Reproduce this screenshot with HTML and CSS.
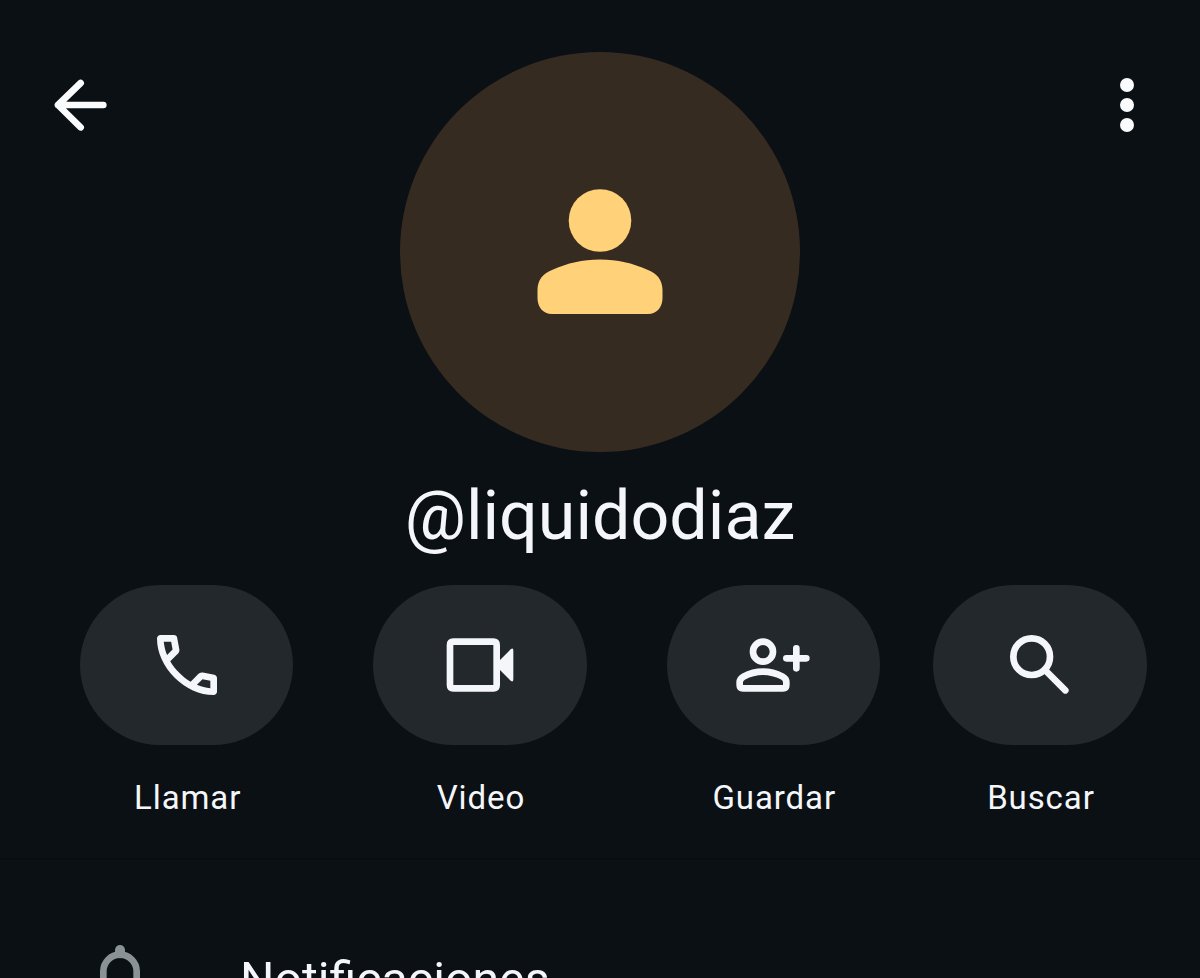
FILE: index.html
```html
<!DOCTYPE html>
<html lang="es">
<head>
  <meta charset="UTF-8" />
  <title>@liquidodiaz</title>
  <link rel="stylesheet" href="styles.css">
</head>
<body>

<header>
  <button class="icon-btn" aria-label="Atrás">
    <svg class="icon line" viewBox="0 0 24 24"><path d="M19 12H5.4M12.2 5.4L5.4 12l6.8 6.7"/></svg>
  </button>
  <div class="avatar">
    <svg viewBox="0 0 126 126">
      <circle cx="63" cy="31.5" r="31.3"/>
      <path d="M.5 101C.5 91 6 84.500 15 81C31 74 45 70.500 63 70.500S95 74 111 81C120 84.500 125.500 91 125.500 101V109C125.500 118 120 125 111 125H15C6 125 .5 118 .5 109Z"/>
    </svg>
  </div>
  <button class="icon-btn" aria-label="Más opciones">
    <svg class="icon" viewBox="0 0 24 24"><circle cx="12" cy="6" r="2.1"/><circle cx="12" cy="12" r="2.1"/><circle cx="12" cy="18" r="2.1"/></svg>
  </button>
</header>

<h1>@liquidodiaz</h1>

<nav class="actions">
  <a class="action">
    <span class="pill">
      <svg class="icon" viewBox="0 0 24 24"><path d="M19.950 21q-3.125 0-6.175-1.362t-5.550-3.863-3.862-5.550T3 4.050q0-.45.3-.75t.75-.3H8.100q.35 0 .625.238t.325.562l.65 3.500q.05.4-.025.675T9.400 8.450L6.975 10.900q.5.925 1.187 1.787t1.513 1.663q.775.775 1.625 1.438T13.100 17l2.350-2.350q.225-.225.588-.337t.712-.063l3.450.7q.35.1.575.363T21 15.900v4.050q0 .45-.3.75t-.75.3ZM6.025 9l1.650-1.650L7.250 5H5.025q.125 1.025.35 2.025T6.025 9Zm8.950 8.950q.975.425 1.988.675T19 18.950v-2.200l-2.350-.475-1.675 1.675Z"/></svg>
    </span>
    <span class="label">Llamar</span>
  </a>
  <a class="action">
    <span class="pill">
      <svg class="icon" viewBox="0 0 24 24"><path fill-rule="evenodd" d="M4 4H16Q18 4 18 6V10.500L21.200 7.300Q22 6.700 22 7.700V16.300Q22 17.300 21.200 16.700L18 13.500V18Q18 20 16 20H4Q2 20 2 18V6Q2 4 4 4ZM4 6V18H16V6Z"/></svg>
    </span>
    <span class="label">Video</span>
  </a>
  <a class="action">
    <span class="pill">
      <svg class="icon line" viewBox="0 0 24 24"><circle cx="9" cy="8" r="3"/><path d="M3 19H15Q16 19 16 18V17.200Q16 16.100 14.900 15.500Q12 14 9 14T3.100 15.500Q2 16.100 2 17.200V18Q2 19 3 19ZM19 7v6M16 10h6"/></svg>
    </span>
    <span class="label">Guardar</span>
  </a>
  <a class="action">
    <span class="pill">
      <svg class="icon line" viewBox="0 0 24 24"><circle cx="9.500" cy="9.500" r="5.500"/><path d="M13.500 13.500l6.100 6.100"/></svg>
    </span>
    <span class="label">Buscar</span>
  </a>
</nav>

<section class="settings">
  <div class="row">
    <svg class="icon line bell" viewBox="0 0 24 24"><path d="M7 18V10a5 5 0 0 1 10 0v8M4.500 18h15"/><path class="stem" d="M12 3.600v1"/></svg>
    <span class="row-text">Notificaciones</span>
  </div>
</section>

</body>
</html>
```
FILE: styles.css
```css
* {
  box-sizing: border-box;
}
body {
  margin: 0;
  height: 978px;
  overflow: hidden;
  background: #0a1014;
  color: #f5f6f9;
  font-family: Roboto, sans-serif;
}
header {
  display: flex;
  justify-content: space-between;
  align-items: flex-start;
  height: 452px;
  padding: 51.500px 33px 0 40px;
}
.icon-btn {
  width: 80px;
  height: 80px;
  margin-top: 13.500px;
  padding: 0;
  border: none;
  background: none;
  color: #fafbfd;
}
.icon {
  display: block;
  width: 80px;
  height: 80px;
  flex: none;
  fill: currentColor;
}
.line {
  fill: none;
  stroke: currentColor;
  stroke-width: 2;
  stroke-linecap: round;
  stroke-linejoin: round;
}
.avatar {
  display: flex;
  justify-content: center;
  width: 400px;
  height: 400px;
  margin-right: 7px;
  padding-top: 137px;
  border-radius: 50%;
  background: #362b21;
}
.avatar svg {
  width: 126px;
  height: 126px;
  fill: #ffd279;
}
h1 {
  margin: 0;
  height: 133px;
  padding-top: 24px;
  text-align: center;
  font-size: 68.200px;
  font-weight: 400;
  line-height: 80px;
}
.actions {
  display: grid;
  grid-template-columns: 293.300px 293.300px 266.700px 213.300px;
  height: 273px;
  padding-left: 80px;
}
.action {
  width: 213.300px;
  text-align: center;
}
.pill {
  display: flex;
  align-items: center;
  justify-content: center;
  height: 160px;
  border-radius: 80px;
  background: #23282c;
}
.label {
  display: block;
  margin-top: 33px;
  padding-left: 2px;
  font-size: 33px;
  line-height: 40px;
  letter-spacing: 0.9px;
}
.settings {
  border-top: 2px solid #080d11;
  padding-top: 78px;
}
.row {
  display: flex;
  gap: 80px;
  padding-left: 80px;
  font-size: 48.300px;
  line-height: 80px;
  white-space: nowrap;
}
.row-text {
  padding-top: 2px;
}
.bell {
  color: #8b9296;
}
.stem {
  stroke-width: 3;
}
```
